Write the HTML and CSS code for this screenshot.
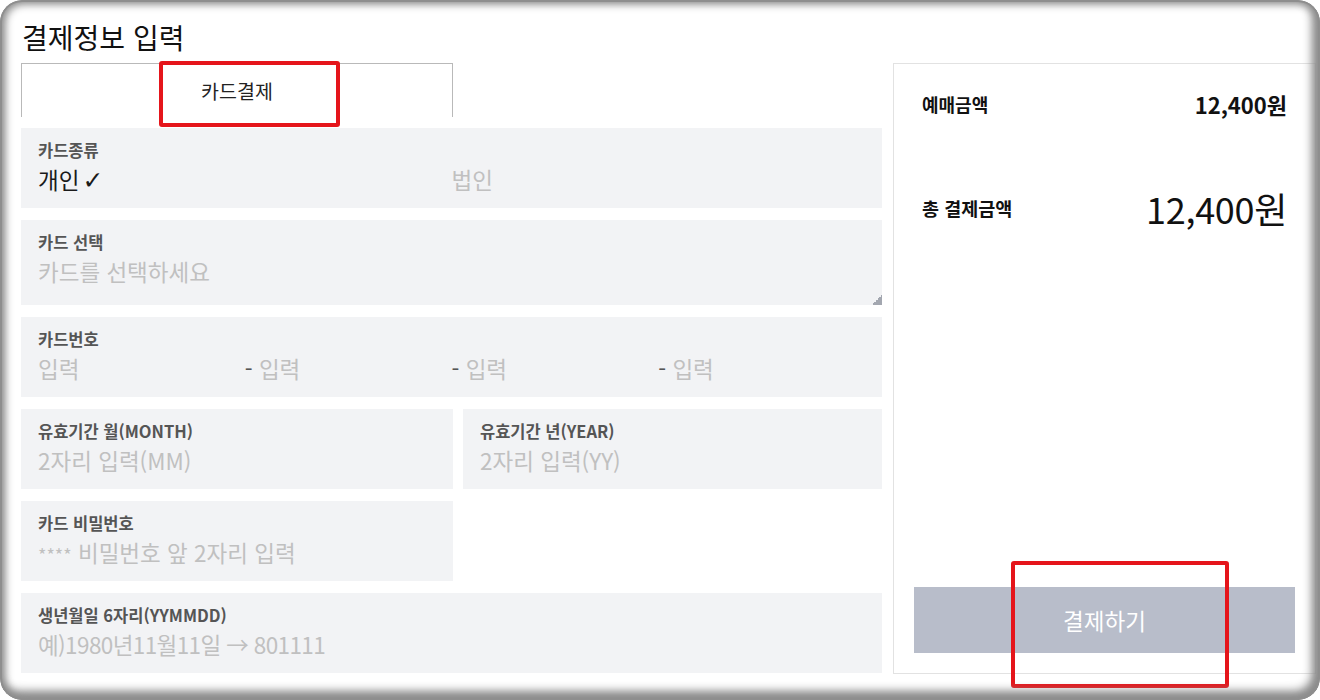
FILE: index.html
```html
<!DOCTYPE html>
<html lang="ko">
<head>
<meta charset="utf-8">
<title>결제정보 입력</title>
<link rel="stylesheet" href="styles.css">
</head>
<body>
<div class="frame">
  <h1 class="title">결제정보 입력</h1>
  <div class="layout">
    <section class="pay-form">
      <div class="tabs"><div class="tab">카드결제</div></div>
      <div class="fields">
        <div class="field">
          <div class="label">카드종류</div>
          <div class="choice">
            <span class="opt on">개인<span class="check">✓</span></span>
            <span class="opt ph">법인</span>
          </div>
        </div>
        <div class="field field-area">
          <div class="label">카드 선택</div>
          <div class="value ph">카드를 선택하세요</div>
          <span class="grip"></span>
        </div>
        <div class="field">
          <div class="label">카드번호</div>
          <div class="card-no">
            <span class="ph">입력</span>
            <span><span class="dash">-</span> <span class="ph">입력</span></span>
            <span><span class="dash">-</span> <span class="ph">입력</span></span>
            <span><span class="dash">-</span> <span class="ph">입력</span></span>
          </div>
        </div>
        <div class="pair">
          <div class="field">
            <div class="label">유효기간 월(MONTH)</div>
            <div class="value ph">2자리 입력(MM)</div>
          </div>
          <div class="field">
            <div class="label">유효기간 년(YEAR)</div>
            <div class="value ph">2자리 입력(YY)</div>
          </div>
        </div>
        <div class="pair">
          <div class="field">
            <div class="label">카드 비밀번호</div>
            <div class="value ph"><span class="stars">****</span> 비밀번호 앞 2자리 입력</div>
          </div>
        </div>
        <div class="field">
          <div class="label">생년월일 6자리(YYMMDD)</div>
          <div class="value ph birth">예)1980년11월11일 → 801111</div>
        </div>
      </div>
    </section>
    <aside class="summary">
      <div class="sum-row first">
        <span class="sum-label">예매금액</span>
        <span class="sum-amount">12,400원</span>
      </div>
      <div class="sum-row total">
        <span class="sum-label">총 결제금액</span>
        <span class="sum-total">12,400원</span>
      </div>
      <button class="pay-btn" type="button">결제하기</button>
    </aside>
  </div>
  <div class="mark mark-tab"></div>
  <div class="mark mark-btn"></div>
</div>
</body>
</html>
```

FILE: styles.css
```css
* { box-sizing: border-box; }

html, body {
  margin: 0;
  padding: 0;
  background: #ffffff;
}

body {
  font-family: "Noto Sans CJK KR", "Noto Sans", sans-serif;
  color: #111;
}

.frame {
  position: relative;
  width: 1320px;
  height: 700px;
  padding: 22px 4px 0 21px;
  border-radius: 22px;
  background: #fff;
  overflow: hidden;
}

.frame::after {
  content: "";
  position: absolute;
  inset: 0;
  border-radius: 22px;
  pointer-events: none;
  box-shadow:
    inset 0 0 0 2px #8e8e8e,
    inset 2px 1px 9px 3px #8e8e8e,
    inset -4px -5px 10px 4px #8a8a8a;
}

.title {
  margin: 0 0 11px 1px;
  font-size: 28px;
  line-height: 30px;
  font-weight: 400;
  color: #111;
}

.layout {
  display: grid;
  grid-template-columns: 861px 423px;
  column-gap: 11px;
  align-items: start;
}

.tabs {
  display: flex;
}

.tab {
  width: 432px;
  height: 54px;
  border: 1px solid #b9b9b9;
  border-bottom: none;
  display: flex;
  align-items: center;
  justify-content: center;
  font-size: 19.5px;
  color: #222;
  background: #fff;
}

.fields {
  margin-top: 11px;
  display: flex;
  flex-direction: column;
  gap: 12px;
}

.field {
  position: relative;
  height: 80px;
  padding: 12px 17px 0;
  background: #f2f3f5;
}

.field-area {
  height: 85px;
}

.label {
  font-size: 16.5px;
  line-height: 20px;
  font-weight: 700;
  color: #555;
}

.value,
.choice,
.card-no {
  margin-top: 4px;
  font-size: 22.5px;
  line-height: 30px;
  white-space: nowrap;
}

.ph {
  color: #c0c0c0;
}

.stars {
  font-size: 18px;
}

.birth {
  letter-spacing: -0.6px;
}

.choice {
  display: grid;
  grid-template-columns: 1fr 1fr;
}

.opt.on {
  color: #1a1a1a;
}

.check {
  font-family: "DejaVu Sans", sans-serif;
  font-size: 25px;
  font-weight: 700;
  margin-left: 3px;
}

.card-no {
  display: grid;
  grid-template-columns: repeat(4, 1fr);
}

.dash {
  color: #555;
}

.grip {
  position: absolute;
  right: 0;
  bottom: 0;
  width: 10px;
  height: 10px;
  background: linear-gradient(135deg, transparent 50%, #a3a7b0 50%);
}

.pair {
  display: grid;
  grid-template-columns: 432px 1fr;
  column-gap: 10px;
}

.summary {
  height: 611px;
  border: 1px solid #e2e2e2;
  padding: 20px;
  display: flex;
  flex-direction: column;
}

.sum-row {
  display: flex;
  justify-content: space-between;
  align-items: center;
  padding: 0 8px;
}

.sum-row.first {
  height: 40px;
}

.sum-row.total {
  margin-top: 59px;
  height: 50px;
}

.sum-label {
  font-size: 18px;
  font-weight: 700;
  color: #111;
}

.total .sum-label {
  font-size: 18.5px;
}

.sum-amount {
  font-size: 22px;
  font-weight: 700;
  color: #111;
}

.sum-total {
  font-size: 36px;
  font-weight: 400;
  color: #111;
  letter-spacing: -0.3px;
}

.pay-btn {
  margin-top: auto;
  height: 66px;
  width: 100%;
  border: none;
  background: #b8bdca;
  color: #fff;
  font-family: inherit;
  font-size: 22.5px;
  padding: 0;
}

.mark {
  position: absolute;
  border: 4px solid #e5151b;
  border-radius: 3px;
  pointer-events: none;
}

.mark-tab {
  left: 159px;
  top: 61px;
  width: 181px;
  height: 66px;
}

.mark-btn {
  left: 1011px;
  top: 561px;
  width: 218px;
  height: 127px;
}
```
